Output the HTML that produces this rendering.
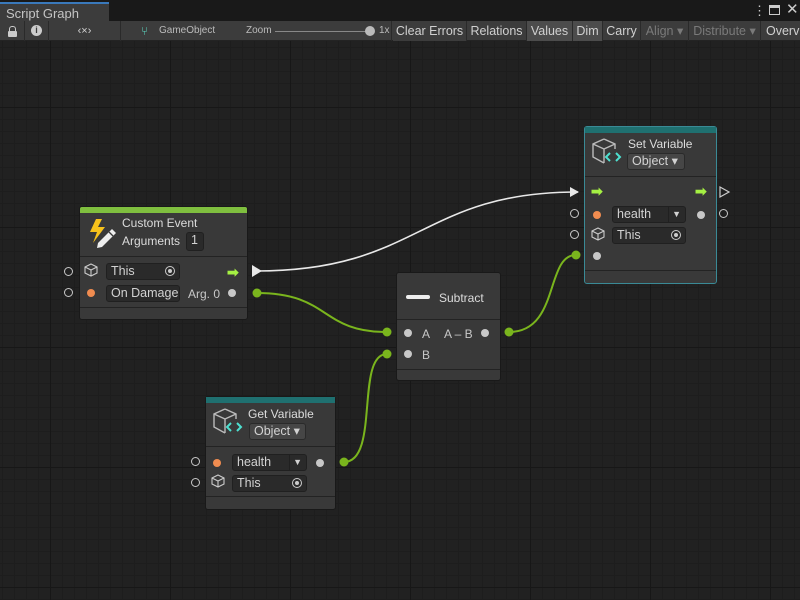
<!DOCTYPE html>
<html><head><style>
*{box-sizing:border-box;margin:0;padding:0}
body{width:800px;height:600px;overflow:hidden;background:#202020;font-family:"Liberation Sans",sans-serif;font-size:12px;color:#d2d2d2;position:relative}
.grid{position:absolute;left:0;top:41px;width:800px;height:559px;
background-image:linear-gradient(#171717 1px,transparent 1px),linear-gradient(90deg,#171717 1px,transparent 1px),linear-gradient(#1d1d1d 1px,transparent 1px),linear-gradient(90deg,#1d1d1d 1px,transparent 1px);
background-size:120px 120px,120px 120px,12px 12px,12px 12px;background-position:0 66px,50px 0,0 6px,2px 0;background-color:#212121}
.tabbar{position:absolute;left:0;top:0;width:800px;height:21px;background:#191919}
.tab{position:absolute;left:0;top:2px;width:109px;height:19px;background:#3c3c3c;border-top:2px solid #3a79bb;font-size:13px;color:#c4c4c4;padding:2px 6px}
.tb{position:absolute;top:21px;left:0;width:800px;height:20px;background:#3c3c3c;border-bottom:1px solid #232323}
.b{position:absolute;top:0;height:20px;line-height:20px;font-size:12.5px;color:#d0d0d0;border-right:1px solid #2a2a2a;text-align:center}
.node{position:absolute;background:#393939;border:1px solid #191919;border-radius:3px}
.title{position:absolute;font-size:12px;color:#dcdcdc}
.field{position:absolute;height:17px;background:#2a2a2a;border:1px solid #202020;border-radius:3px;font-size:12.5px;color:#d2d2d2;padding-left:4px;line-height:15px}
.sep{position:absolute;left:0;right:0;height:1px;background:#232323}
.dot{position:absolute;width:8px;height:8px;border-radius:50%}
.ring{position:absolute;width:9px;height:9px;border-radius:50%;border:1.3px solid #c8c8c8}
.lab{position:absolute;font-size:12px;color:#c8c8c8}
</style></head><body>
<div class="grid"></div>
<div class="tabbar"><div class="tab">Script Graph</div>
<div style="position:absolute;left:753px;top:3px;color:#ccc;font-size:13px">⋮</div>
<div style="position:absolute;left:769px;top:5px;width:11px;height:10px;border:1.5px solid #ccc;border-top-width:3px"></div>
<div style="position:absolute;left:786px;top:0px;color:#ccc;font-size:15px">✕</div>
</div>
<div class="tb">
<div class="b" style="left:0;width:25px"><span style="position:absolute;left:9px;top:5px;width:7px;height:6px;border:1.5px solid #ccc;border-bottom:none;border-radius:3px 3px 0 0"></span><span style="position:absolute;left:8px;top:10px;width:9px;height:6px;background:#ccc;border-radius:1px"></span></div>
<div class="b" style="left:25px;width:24px"><span style="display:inline-block;width:11px;height:11px;border-radius:50%;background:#ccc;color:#3c3c3c;font-size:9px;line-height:11px;font-weight:bold;margin-top:4px;vertical-align:top">i</span></div>
<div class="b" style="left:49px;width:72px;font-size:11px">‹×›</div>
<div class="b" style="left:121px;width:271px;text-align:left;font-size:10px;color:#bbb"><span style="position:absolute;left:20px;top:0;color:#5cd6c0;font-size:12px">⑂</span><span style="position:absolute;left:38px">GameObject</span><span style="position:absolute;left:125px">Zoom</span><span style="position:absolute;left:154px;top:10px;width:96px;height:1px;background:#888"></span><span style="position:absolute;left:244px;top:5px;width:10px;height:10px;border-radius:50%;background:#bbb"></span><span style="position:absolute;left:258px">1x</span></div>
<div class="b" style="left:393px;width:74px;background:#3c3c3c">Clear Errors</div>
<div class="b" style="left:467px;width:60px">Relations</div>
<div class="b" style="left:527px;width:46px;background:#4c4c4c">Values</div>
<div class="b" style="left:573px;width:30px;background:#4c4c4c">Dim</div>
<div class="b" style="left:603px;width:38px">Carry</div>
<div class="b" style="left:641px;width:48px;color:#7a7a7a">Align ▾</div>
<div class="b" style="left:689px;width:72px;color:#7a7a7a">Distribute ▾</div>
<div class="b" style="left:761px;width:50px;text-align:left;padding-left:5px">Overview</div>
</div>

<svg style="position:absolute;left:0;top:0" width="800" height="600">
<path d="M256 271 C 420 271, 420 192, 578 192" stroke="#e8e8e8" stroke-width="1.6" fill="none"/>
<polygon points="252,265 262,271 252,277" fill="#e8e8e8"/>
<polygon points="570,187 579,192 570,197" fill="#e8e8e8"/>
<path d="M257 293 C 330 293, 320 332, 387 332" stroke="#7ab51d" stroke-width="2" fill="none"/>
<path d="M344 462 C 380 462, 355 354, 387 354" stroke="#7ab51d" stroke-width="2" fill="none"/>
<path d="M509 332 C 560 332, 545 255, 576 255" stroke="#7ab51d" stroke-width="2" fill="none"/>
<g fill="#7ab51d"><circle cx="257" cy="293" r="4.5"/><circle cx="387" cy="332" r="4.5"/><circle cx="387" cy="354" r="4.5"/><circle cx="344" cy="462" r="4.5"/><circle cx="509" cy="332" r="4.5"/><circle cx="576" cy="255" r="4.5"/></g>
<polygon points="720,187 729,192 720,197" fill="none" stroke="#ccc" stroke-width="1.2"/>
</svg>

<!-- Custom Event -->
<div class="node" style="left:79px;top:206px;width:169px;height:114px">
<div style="position:absolute;left:0;top:0;right:0;height:6px;background:#7fbf3f;border-radius:2px 2px 0 0"></div>
<svg style="position:absolute;left:6px;top:10px" width="32" height="32"><polygon points="10,2 4,15 11,15 7,26 19,10 12,10 16,2" fill="#f7c21b"/><path d="M12 26 L26 12 L30 16 L16 30 L11 31 Z" fill="#eee"/><path d="M23 15 L27 19" stroke="#393939" stroke-width="1.3"/></svg>
<div class="title" style="left:42px;top:9px">Custom Event</div>
<div class="title" style="left:42px;top:27px">Arguments</div>
<div class="field" style="left:106px;top:25px;width:18px;height:19px">1</div>
<div class="sep" style="top:49px"></div>
<svg style="position:absolute;left:4px;top:56px" width="14" height="14" fill="none" stroke="#ccc" stroke-width="1.1"><path d="M7 1 L13 4 L13 10 L7 13 L1 10 L1 4 Z M1 4 L7 7 L13 4 M7 7 L7 13"/></svg>
<div class="field" style="left:26px;top:56px;width:74px">This<span style="position:absolute;right:4px;top:2px;width:10px;height:10px;border-radius:50%;border:1px solid #ccc"></span><span style="position:absolute;right:7px;top:5px;width:4px;height:4px;border-radius:50%;background:#ccc"></span></div>
<div style="position:absolute;left:147px;top:57px;color:#a5f043;font-size:14px;font-weight:bold">➡</div>
<div class="dot" style="left:7px;top:82px;background:#f08c50"></div>
<div class="field" style="left:26px;top:78px;width:74px">On Damage</div>
<div class="lab" style="left:108px;top:80px">Arg. 0</div>
<div class="dot" style="left:148px;top:82px;background:#c8c8c8"></div>
<div class="sep" style="top:100px"></div>
</div>
<div class="ring" style="left:64px;top:267px"></div>
<div class="ring" style="left:64px;top:288px"></div>

<!-- Set Variable -->
<div class="node" style="left:584px;top:126px;width:133px;height:158px;border-color:#3a8a96">
<div style="position:absolute;left:0;top:0;right:0;height:6px;background:#1f7070"></div>
<svg style="position:absolute;left:6px;top:10px" width="32" height="32" fill="none"><path d="M13 2 L24 7 L24 12 M13 2 L2 7 L2 20 L13 26 M2 7 L13 12 L24 7 M13 12 L13 26" stroke="#bbb" stroke-width="1.4"/><path d="M19 16 L15 20 L19 24 M25 16 L29 20 L25 24" stroke="#4ee0d0" stroke-width="2"/></svg>
<div class="title" style="left:43px;top:10px">Set Variable</div>
<div class="field" style="left:42px;top:26px;width:58px;background:#464646;border-color:#2a2a2a">Object ▾</div>
<div class="sep" style="top:49px"></div>
<div style="position:absolute;left:6px;top:56px;color:#a5f043;font-size:14px;font-weight:bold">➡</div>
<div style="position:absolute;left:110px;top:56px;color:#a5f043;font-size:14px;font-weight:bold">➡</div>
<div class="dot" style="left:8px;top:84px;background:#f08c50"></div>
<div class="field" style="left:27px;top:79px;width:74px">health<span style="position:absolute;left:55px;top:-1px;width:1px;height:17px;background:#202020"></span><span style="position:absolute;right:4px;top:0;font-size:9px">▼</span></div>
<div class="dot" style="left:112px;top:84px;background:#c8c8c8"></div>
<svg style="position:absolute;left:6px;top:100px" width="14" height="14" fill="none" stroke="#ccc" stroke-width="1.1"><path d="M7 1 L13 4 L13 10 L7 13 L1 10 L1 4 Z M1 4 L7 7 L13 4 M7 7 L7 13"/></svg>
<div class="field" style="left:27px;top:100px;width:74px">This<span style="position:absolute;right:4px;top:2px;width:10px;height:10px;border-radius:50%;border:1px solid #ccc"></span><span style="position:absolute;right:7px;top:5px;width:4px;height:4px;border-radius:50%;background:#ccc"></span></div>
<div class="dot" style="left:8px;top:125px;background:#c8c8c8"></div>
<div class="sep" style="top:143px"></div>
</div>
<div class="ring" style="left:570px;top:209px"></div>
<div class="ring" style="left:570px;top:230px"></div>
<div class="ring" style="left:719px;top:209px"></div>

<!-- Subtract -->
<div class="node" style="left:396px;top:272px;width:105px;height:109px">
<div style="position:absolute;left:9px;top:22px;width:24px;height:4px;background:#eee;border-radius:2px"></div>
<div class="title" style="left:42px;top:18px">Subtract</div>
<div class="sep" style="top:46px"></div>
<div class="dot" style="left:7px;top:56px;background:#c8c8c8"></div>
<div class="lab" style="left:25px;top:54px">A</div>
<div class="lab" style="left:47px;top:54px">A – B</div>
<div class="dot" style="left:84px;top:56px;background:#c8c8c8"></div>
<div class="dot" style="left:7px;top:77px;background:#c8c8c8"></div>
<div class="lab" style="left:25px;top:75px">B</div>
<div class="sep" style="top:96px"></div>
</div>

<!-- Get Variable -->
<div class="node" style="left:205px;top:396px;width:131px;height:114px">
<div style="position:absolute;left:0;top:0;right:0;height:6px;background:#1f7070"></div>
<svg style="position:absolute;left:6px;top:10px" width="32" height="32" fill="none"><path d="M13 2 L24 7 L24 12 M13 2 L2 7 L2 20 L13 26 M2 7 L13 12 L24 7 M13 12 L13 26" stroke="#bbb" stroke-width="1.4"/><path d="M19 16 L15 20 L19 24 M25 16 L29 20 L25 24" stroke="#4ee0d0" stroke-width="2"/></svg>
<div class="title" style="left:42px;top:10px">Get Variable</div>
<div class="field" style="left:43px;top:26px;width:57px;background:#464646;border-color:#2a2a2a">Object ▾</div>
<div class="sep" style="top:49px"></div>
<div class="dot" style="left:7px;top:62px;background:#f08c50"></div>
<div class="field" style="left:26px;top:57px;width:75px">health<span style="position:absolute;left:56px;top:-1px;width:1px;height:17px;background:#202020"></span><span style="position:absolute;right:4px;top:0;font-size:9px">▼</span></div>
<div class="dot" style="left:110px;top:62px;background:#c8c8c8"></div>
<svg style="position:absolute;left:5px;top:77px" width="14" height="14" fill="none" stroke="#ccc" stroke-width="1.1"><path d="M7 1 L13 4 L13 10 L7 13 L1 10 L1 4 Z M1 4 L7 7 L13 4 M7 7 L7 13"/></svg>
<div class="field" style="left:26px;top:78px;width:75px">This<span style="position:absolute;right:4px;top:2px;width:10px;height:10px;border-radius:50%;border:1px solid #ccc"></span><span style="position:absolute;right:7px;top:5px;width:4px;height:4px;border-radius:50%;background:#ccc"></span></div>
<div class="sep" style="top:99px"></div>
</div>
<div class="ring" style="left:191px;top:457px"></div>
<div class="ring" style="left:191px;top:478px"></div>
</body></html>
